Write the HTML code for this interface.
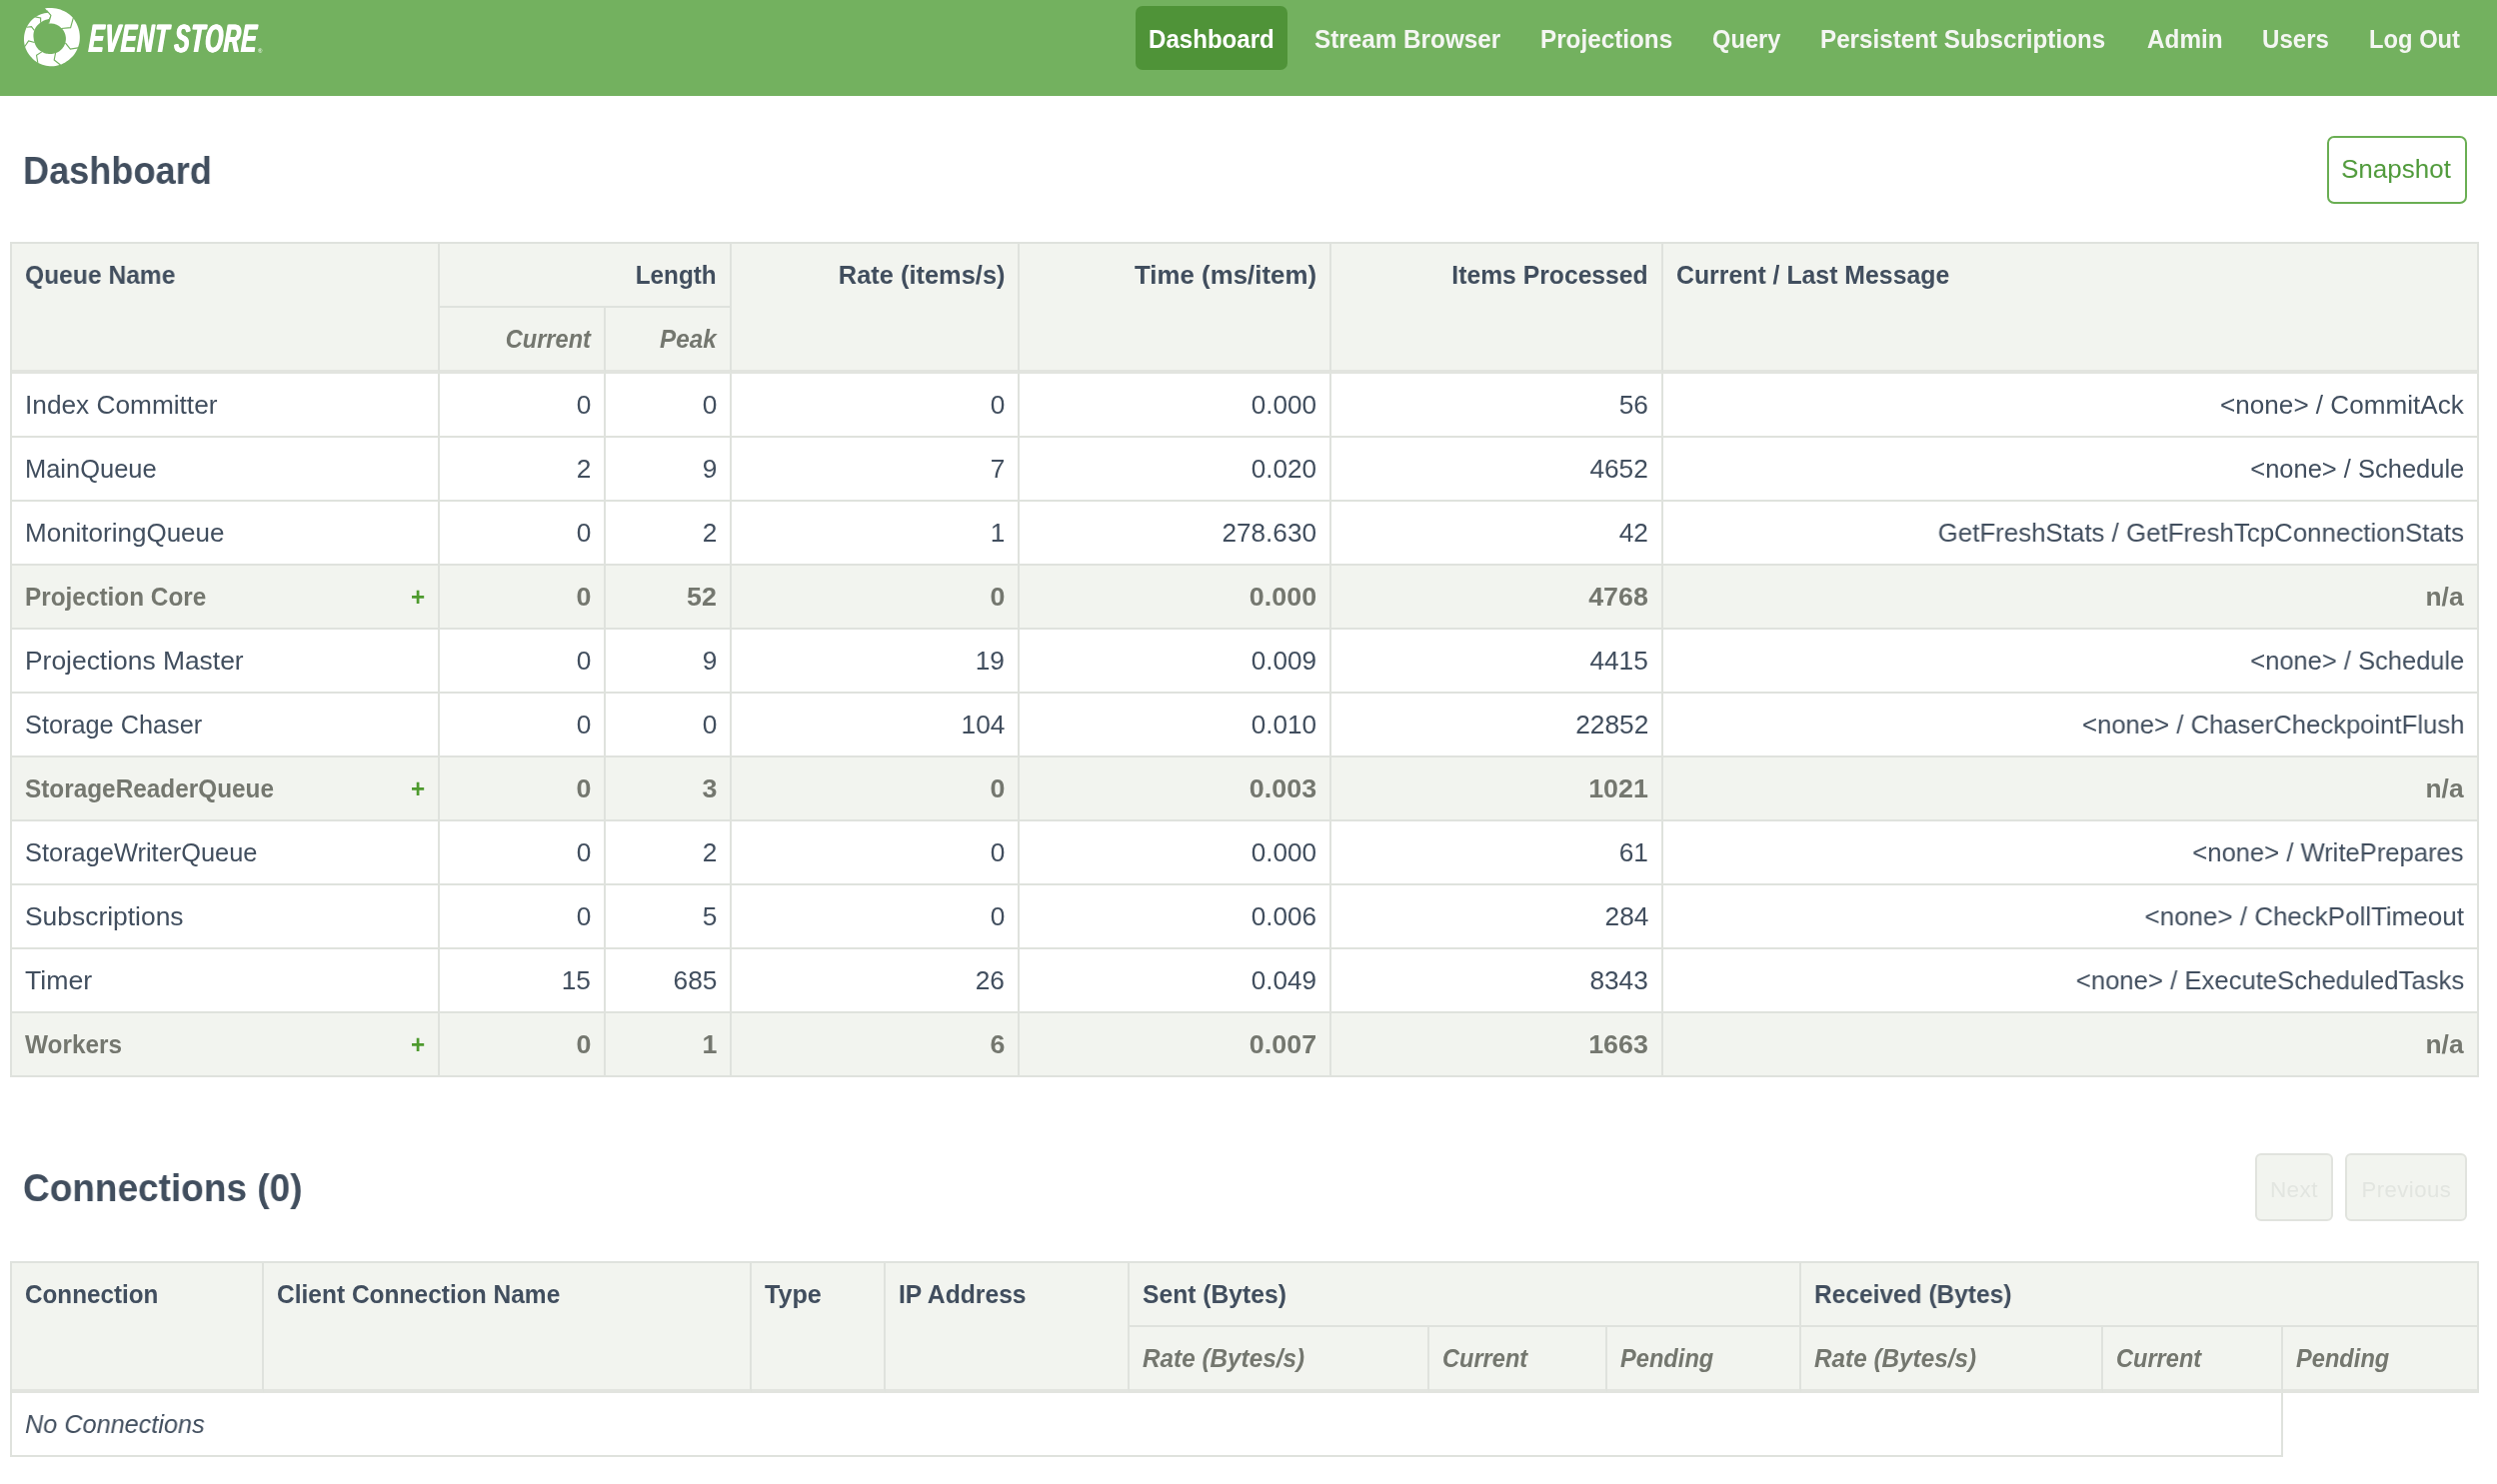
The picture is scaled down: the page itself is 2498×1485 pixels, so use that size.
<!DOCTYPE html>
<html lang="en"><head><meta charset="utf-8"><title>Event Store - Dashboard</title>
<style>
*{box-sizing:border-box;margin:0;padding:0}
html,body{width:2498px;height:1485px;background:#fff;overflow:hidden}
body{position:relative;font-family:"Liberation Sans", sans-serif;font-size:26px;line-height:36px;color:#414e5e;-webkit-font-smoothing:antialiased}
#page{position:absolute;left:0;top:0;width:2498px;height:1485px;will-change:transform}
.x{display:inline-block;white-space:nowrap}
#hdr{position:absolute;left:0;top:0;width:2498px;height:96px;background:#73b15f}
#nav a{position:absolute;top:6px;height:64px;line-height:67px;padding:0 13px;color:#f4f6f2;font-weight:700;font-size:26px;border-radius:7px;white-space:nowrap;text-decoration:none}
#nav a.act{background:#4f9338;color:#fff}
h1{position:absolute;left:23px;font-size:39px;line-height:54px;font-weight:700;color:#414e5e;white-space:nowrap}
.btn{position:absolute;height:68px;line-height:62px;border:2px solid #6aae53;border-radius:7px;color:#4f9a3a;text-align:center;font-size:26px;background:#fff}
.btn.dis{border-color:#e1e3de;background:#f2f4ef;color:#e2e5e0;font-size:22.4px;line-height:70px;border-radius:6px;letter-spacing:.45px}
table{position:absolute;left:10px;border-collapse:separate;border-spacing:0;table-layout:fixed;border-top:2px solid #dfe2dd;border-left:2px solid #dfe2dd}
td,th{height:64px;padding:13px 13px 13px 13px;border-right:2px solid #dfe2dd;border-bottom:2px solid #dfe2dd;vertical-align:top;text-align:left;font-weight:400;white-space:nowrap;overflow:visible}
th{background:#f2f4ef;font-weight:700}
th.sub{font-style:italic;color:#74776f;height:66px;border-bottom:4px solid #e2e4df}
th.rs{border-bottom:4px solid #e2e4df}
.r{text-align:right}
tr.g td{background:#f2f4ef;color:#74776f;font-weight:700}
.plus{float:right;color:#4e9a2e;font-weight:700}
em{font-style:italic}
#brand{position:absolute;left:89px;top:15.5px;height:44px;line-height:44px;color:#fff;white-space:nowrap;font-family:"Liberation Sans",sans-serif}
#brand .bt{display:inline-block;font-size:39.5px;font-weight:700;font-style:italic;transform:skewX(-3.2deg) scaleX(.5806);transform-origin:0 50%;text-shadow:1px 0 0 #fff,-1px 0 0 #fff;letter-spacing:1.5px;word-spacing:-4px}
#brand .reg{position:absolute;left:169px;top:31.5px;font-size:6px;line-height:8px;font-weight:700;opacity:.8}
</style></head>
<body><div id="page">
<div id="hdr"><svg id="logo" style="position:absolute;left:0;top:0" width="100" height="96" viewBox="0 0 100 96"><path d="M44.99 8.19 L45.56 8.15 L47.70 7.94 L49.85 7.89 L52.00 7.93 L54.14 8.13 L56.27 8.47 L58.37 8.96 L60.43 9.60 L62.44 10.38 L64.40 11.31 L66.29 12.36 L68.10 13.55 L69.83 14.86 L71.46 16.29 L72.99 17.83 L74.27 19.59 L75.42 21.42 L76.44 23.32 L77.34 25.26 L78.12 27.25 L78.75 29.28 L79.24 31.34 L79.59 33.42 L79.79 35.52 L79.84 37.62 L79.76 39.71 L79.54 41.79 L79.17 43.84 L78.60 45.84 L77.86 47.77 L77.06 49.66 L76.14 51.49 L75.09 53.24 L73.90 54.89 L72.58 56.43 L71.17 57.86 L69.66 59.18 L68.12 60.44 L66.52 61.61 L64.84 62.66 L63.10 63.59 L61.30 64.39 L59.45 65.04 L57.56 65.54 L55.64 65.90 L53.71 66.13 L51.78 66.22 L49.85 66.17 L47.94 66.02 L46.05 65.74 L44.19 65.33 L42.36 64.79 L40.59 64.12 L38.87 63.34 L37.22 62.42 L35.68 61.35 L34.22 60.18 L32.86 58.92 L31.57 57.60 L30.33 56.25 L29.18 54.82 L28.14 53.31 L27.20 51.74 L26.38 50.11 L25.68 48.43 L25.10 46.71 L24.63 44.96 L24.29 43.18 L24.07 41.38 L23.98 39.57 L24.01 37.77 L24.15 35.97 L24.42 34.18 L24.81 32.42 L25.32 30.70 L25.95 29.01 L26.69 27.37 L27.52 25.78 L28.45 24.24 L29.49 22.76 L30.63 21.36 L31.87 20.04 L33.19 18.81 L34.60 17.68 L36.09 16.65 L37.66 15.74 L39.29 14.95 L40.97 14.27 L42.69 13.71 L44.45 13.27 L46.24 12.95 L48.04 12.76 L48.49 12.74 L50.77 15.52 L48.88 19.05 L48.48 19.08 L47.14 19.38 L45.84 19.77 L44.57 20.26 L43.36 20.82 L42.19 21.46 L41.09 22.18 L40.03 22.95 L39.03 23.77 L38.09 24.65 L37.22 25.58 L36.42 26.58 L35.70 27.61 L35.06 28.69 L34.50 29.80 L34.07 30.97 L33.77 32.17 L33.57 33.38 L33.45 34.58 L33.42 35.77 L33.48 36.95 L33.62 38.10 L33.77 39.23 L33.94 40.34 L34.18 41.43 L34.50 42.50 L34.83 43.55 L35.23 44.58 L35.70 45.57 L36.24 46.53 L36.85 47.44 L37.51 48.31 L38.24 49.13 L39.01 49.89 L39.84 50.60 L40.71 51.25 L41.63 51.83 L42.58 52.34 L43.57 52.79 L44.58 53.16 L45.61 53.46 L46.66 53.69 L47.72 53.85 L48.78 53.93 L49.85 53.93 L50.92 53.95 L51.99 53.90 L53.06 53.78 L54.13 53.58 L55.18 53.30 L56.20 52.93 L57.20 52.49 L58.17 51.98 L59.10 51.40 L59.99 50.75 L60.84 50.05 L61.64 49.28 L62.38 48.46 L63.07 47.58 L63.69 46.66 L64.23 45.68 L64.69 44.66 L65.09 43.62 L65.41 42.55 L65.66 41.46 L65.82 40.35 L65.92 39.23 L65.91 38.11 L65.80 36.99 L65.62 35.89 L65.36 34.80 L65.03 33.74 L64.62 32.70 L64.15 31.70 L63.60 30.73 L62.97 29.82 L62.29 28.95 L61.54 28.14 L60.75 27.38 L59.90 26.69 L59.02 26.06 L58.09 25.49 L57.13 24.98 L56.14 24.54 L55.13 24.17 L54.10 23.87 L53.05 23.64 L51.99 23.49 L50.92 23.41 L49.85 23.41 L48.79 23.48 L48.57 23.56 L50.88 15.36Z" fill="#fff"/><path d="M46.78 10.50 L50.88 15.36 L48.67 23.30M73.41 17.67 L70.59 27.66 L61.38 28.48M78.02 47.84 L70.34 49.17 L65.37 42.92M60.50 65.04 L54.20 59.92 L55.54 53.01M37.82 63.00 L36.54 55.31 L41.81 51.88M24.76 46.50 L28.60 40.97 L34.64 42.56M26.55 27.20 L31.41 26.63 L34.33 30.32M35.25 16.85 L40.63 17.93 L40.63 22.69" fill="none" stroke="#73b15f" stroke-width="1.15" stroke-linejoin="miter"/></svg><div id="brand"><span class="bt">EVENT STORE</span><span class="reg">®</span></div><div id="nav"><a class="act" style="left:1136.0px;width:152px"><span class="x" style="transform:scaleX(0.9264);transform-origin:0 50%;">Dashboard</span></a><a class="" style="left:1301.5px"><span class="x" style="transform:scaleX(0.9339);transform-origin:0 50%;">Stream Browser</span></a><a class="" style="left:1527.7px"><span class="x" style="transform:scaleX(0.9331);transform-origin:0 50%;">Projections</span></a><a class="" style="left:1699.6px"><span class="x" style="transform:scaleX(0.9108);transform-origin:0 50%;">Query</span></a><a class="" style="left:1808.0px"><span class="x" style="transform:scaleX(0.9311);transform-origin:0 50%;">Persistent Subscriptions</span></a><a class="" style="left:2134.6px"><span class="x" style="transform:scaleX(0.9351);transform-origin:0 50%;">Admin</span></a><a class="" style="left:2250.0px"><span class="x" style="transform:scaleX(0.9256);transform-origin:0 50%;">Users</span></a><a class="" style="left:2357.0px"><span class="x" style="transform:scaleX(0.9136);transform-origin:0 50%;">Log Out</span></a></div></div>
<h1 style="top:144px"><span class="x" style="transform:scaleX(0.9268);transform-origin:0 50%;">Dashboard</span></h1>
<div class="btn" style="left:2328px;top:136px;width:140px"><span class="x" style="transform:scaleX(0.9977);transform-origin:50% 50%;margin-right:2px;">Snapshot</span></div>
<table id="t1" style="top:242px;width:2470px"><colgroup><col style="width:428px"><col style="width:166px"><col style="width:126px"><col style="width:288px"><col style="width:312px"><col style="width:332px"><col style="width:816px"></colgroup><thead><tr><th rowspan="2" class="rs"><span class="x" style="transform:scaleX(0.9463);transform-origin:0 50%;">Queue Name</span></th><th colspan="2" class="r"><span class="x" style="transform:scaleX(0.9336);transform-origin:100% 50%;">Length</span></th><th rowspan="2" class="rs r"><span class="x" style="transform:scaleX(0.9777);transform-origin:100% 50%;">Rate (items/s)</span></th><th rowspan="2" class="rs r"><span class="x" style="transform:scaleX(0.9945);transform-origin:100% 50%;">Time (ms/item)</span></th><th rowspan="2" class="rs r"><span class="x" style="transform:scaleX(0.9500);transform-origin:100% 50%;">Items Processed</span></th><th rowspan="2" class="rs"><span class="x" style="transform:scaleX(0.9552);transform-origin:0 50%;">Current / Last Message</span></th></tr><tr><th class="sub r"><span class="x" style="transform:scaleX(0.9067);transform-origin:100% 50%;">Current</span></th><th class="sub r"><span class="x" style="transform:scaleX(0.9334);transform-origin:100% 50%;">Peak</span></th></tr></thead><tbody><tr class=""><td><span class="x" style="transform:scaleX(1.0093);transform-origin:0 50%;">Index Committer</span></td><td class="r"><span class="x" style="transform:scaleX(1.0108);transform-origin:100% 50%;">0</span></td><td class="r"><span class="x" style="transform:scaleX(1.0108);transform-origin:100% 50%;">0</span></td><td class="r"><span class="x" style="transform:scaleX(1.0108);transform-origin:100% 50%;">0</span></td><td class="r"><span class="x" style="transform:scaleX(1.0036);transform-origin:100% 50%;">0.000</span></td><td class="r"><span class="x" style="transform:scaleX(1.0108);transform-origin:100% 50%;">56</span></td><td class="r"><span class="x" style="transform:scaleX(1.0038);transform-origin:100% 50%;">&lt;none&gt; / CommitAck</span></td></tr><tr class=""><td><span class="x" style="transform:scaleX(0.9794);transform-origin:0 50%;">MainQueue</span></td><td class="r"><span class="x" style="transform:scaleX(1.0108);transform-origin:100% 50%;">2</span></td><td class="r"><span class="x" style="transform:scaleX(1.0108);transform-origin:100% 50%;">9</span></td><td class="r"><span class="x" style="transform:scaleX(1.0108);transform-origin:100% 50%;">7</span></td><td class="r"><span class="x" style="transform:scaleX(1.0036);transform-origin:100% 50%;">0.020</span></td><td class="r"><span class="x" style="transform:scaleX(1.0105);transform-origin:100% 50%;">4652</span></td><td class="r"><span class="x" style="transform:scaleX(0.9805);transform-origin:100% 50%;">&lt;none&gt; / Schedule</span></td></tr><tr class=""><td><span class="x" style="transform:scaleX(1.0002);transform-origin:0 50%;">MonitoringQueue</span></td><td class="r"><span class="x" style="transform:scaleX(1.0108);transform-origin:100% 50%;">0</span></td><td class="r"><span class="x" style="transform:scaleX(1.0108);transform-origin:100% 50%;">2</span></td><td class="r"><span class="x" style="transform:scaleX(1.0108);transform-origin:100% 50%;">1</span></td><td class="r"><span class="x" style="transform:scaleX(1.0058);transform-origin:100% 50%;">278.630</span></td><td class="r"><span class="x" style="transform:scaleX(1.0108);transform-origin:100% 50%;">42</span></td><td class="r"><span class="x" style="transform:scaleX(0.9950);transform-origin:100% 50%;">GetFreshStats / GetFreshTcpConnectionStats</span></td></tr><tr class="g"><td><span class="x" style="transform:scaleX(0.9366);transform-origin:0 50%;">Projection Core</span><span class="plus"><span class="x" style="transform:scaleX(0.9331);transform-origin:100% 50%;">+</span></span></td><td class="r"><span class="x" style="transform:scaleX(1.0313);transform-origin:100% 50%;">0</span></td><td class="r"><span class="x" style="transform:scaleX(1.0319);transform-origin:100% 50%;">52</span></td><td class="r"><span class="x" style="transform:scaleX(1.0313);transform-origin:100% 50%;">0</span></td><td class="r"><span class="x" style="transform:scaleX(1.0329);transform-origin:100% 50%;">0.000</span></td><td class="r"><span class="x" style="transform:scaleX(1.0316);transform-origin:100% 50%;">4768</span></td><td class="r"><span class="x" style="transform:scaleX(1.0150);transform-origin:100% 50%;">n/a</span></td></tr><tr class=""><td><span class="x" style="transform:scaleX(1.0155);transform-origin:0 50%;">Projections Master</span></td><td class="r"><span class="x" style="transform:scaleX(1.0108);transform-origin:100% 50%;">0</span></td><td class="r"><span class="x" style="transform:scaleX(1.0108);transform-origin:100% 50%;">9</span></td><td class="r"><span class="x" style="transform:scaleX(1.0108);transform-origin:100% 50%;">19</span></td><td class="r"><span class="x" style="transform:scaleX(1.0036);transform-origin:100% 50%;">0.009</span></td><td class="r"><span class="x" style="transform:scaleX(1.0105);transform-origin:100% 50%;">4415</span></td><td class="r"><span class="x" style="transform:scaleX(0.9805);transform-origin:100% 50%;">&lt;none&gt; / Schedule</span></td></tr><tr class=""><td><span class="x" style="transform:scaleX(0.9731);transform-origin:0 50%;">Storage Chaser</span></td><td class="r"><span class="x" style="transform:scaleX(1.0108);transform-origin:100% 50%;">0</span></td><td class="r"><span class="x" style="transform:scaleX(1.0108);transform-origin:100% 50%;">0</span></td><td class="r"><span class="x" style="transform:scaleX(1.0104);transform-origin:100% 50%;">104</span></td><td class="r"><span class="x" style="transform:scaleX(1.0036);transform-origin:100% 50%;">0.010</span></td><td class="r"><span class="x" style="transform:scaleX(1.0104);transform-origin:100% 50%;">22852</span></td><td class="r"><span class="x" style="transform:scaleX(0.9871);transform-origin:100% 50%;">&lt;none&gt; / ChaserCheckpointFlush</span></td></tr><tr class="g"><td><span class="x" style="transform:scaleX(0.9365);transform-origin:0 50%;">StorageReaderQueue</span><span class="plus"><span class="x" style="transform:scaleX(0.9331);transform-origin:100% 50%;">+</span></span></td><td class="r"><span class="x" style="transform:scaleX(1.0313);transform-origin:100% 50%;">0</span></td><td class="r"><span class="x" style="transform:scaleX(1.0313);transform-origin:100% 50%;">3</span></td><td class="r"><span class="x" style="transform:scaleX(1.0313);transform-origin:100% 50%;">0</span></td><td class="r"><span class="x" style="transform:scaleX(1.0329);transform-origin:100% 50%;">0.003</span></td><td class="r"><span class="x" style="transform:scaleX(1.0316);transform-origin:100% 50%;">1021</span></td><td class="r"><span class="x" style="transform:scaleX(1.0150);transform-origin:100% 50%;">n/a</span></td></tr><tr class=""><td><span class="x" style="transform:scaleX(0.9770);transform-origin:0 50%;">StorageWriterQueue</span></td><td class="r"><span class="x" style="transform:scaleX(1.0108);transform-origin:100% 50%;">0</span></td><td class="r"><span class="x" style="transform:scaleX(1.0108);transform-origin:100% 50%;">2</span></td><td class="r"><span class="x" style="transform:scaleX(1.0108);transform-origin:100% 50%;">0</span></td><td class="r"><span class="x" style="transform:scaleX(1.0036);transform-origin:100% 50%;">0.000</span></td><td class="r"><span class="x" style="transform:scaleX(1.0108);transform-origin:100% 50%;">61</span></td><td class="r"><span class="x" style="transform:scaleX(0.9844);transform-origin:100% 50%;">&lt;none&gt; / WritePrepares</span></td></tr><tr class=""><td><span class="x" style="transform:scaleX(1.0160);transform-origin:0 50%;">Subscriptions</span></td><td class="r"><span class="x" style="transform:scaleX(1.0108);transform-origin:100% 50%;">0</span></td><td class="r"><span class="x" style="transform:scaleX(1.0108);transform-origin:100% 50%;">5</span></td><td class="r"><span class="x" style="transform:scaleX(1.0108);transform-origin:100% 50%;">0</span></td><td class="r"><span class="x" style="transform:scaleX(1.0036);transform-origin:100% 50%;">0.006</span></td><td class="r"><span class="x" style="transform:scaleX(1.0104);transform-origin:100% 50%;">284</span></td><td class="r"><span class="x" style="transform:scaleX(0.9984);transform-origin:100% 50%;">&lt;none&gt; / CheckPollTimeout</span></td></tr><tr class=""><td><span class="x" style="transform:scaleX(1.0267);transform-origin:0 50%;">Timer</span></td><td class="r"><span class="x" style="transform:scaleX(1.0108);transform-origin:100% 50%;">15</span></td><td class="r"><span class="x" style="transform:scaleX(1.0104);transform-origin:100% 50%;">685</span></td><td class="r"><span class="x" style="transform:scaleX(1.0108);transform-origin:100% 50%;">26</span></td><td class="r"><span class="x" style="transform:scaleX(1.0036);transform-origin:100% 50%;">0.049</span></td><td class="r"><span class="x" style="transform:scaleX(1.0105);transform-origin:100% 50%;">8343</span></td><td class="r"><span class="x" style="transform:scaleX(0.9878);transform-origin:100% 50%;">&lt;none&gt; / ExecuteScheduledTasks</span></td></tr><tr class="g"><td><span class="x" style="transform:scaleX(0.9375);transform-origin:0 50%;">Workers</span><span class="plus"><span class="x" style="transform:scaleX(0.9331);transform-origin:100% 50%;">+</span></span></td><td class="r"><span class="x" style="transform:scaleX(1.0313);transform-origin:100% 50%;">0</span></td><td class="r"><span class="x" style="transform:scaleX(1.0313);transform-origin:100% 50%;">1</span></td><td class="r"><span class="x" style="transform:scaleX(1.0313);transform-origin:100% 50%;">6</span></td><td class="r"><span class="x" style="transform:scaleX(1.0329);transform-origin:100% 50%;">0.007</span></td><td class="r"><span class="x" style="transform:scaleX(1.0316);transform-origin:100% 50%;">1663</span></td><td class="r"><span class="x" style="transform:scaleX(1.0150);transform-origin:100% 50%;">n/a</span></td></tr></tbody></table>
<h1 style="top:1162px"><span class="x" style="transform:scaleX(0.9484);transform-origin:0 50%;">Connections (0)</span></h1>
<div class="btn dis" style="left:2256px;top:1154px;width:78px"><span class="x" style="transform:scaleX(1.0052);transform-origin:50% 50%;">Next</span></div>
<div class="btn dis" style="left:2346px;top:1154px;width:122px"><span class="x" style="transform:scaleX(0.9898);transform-origin:50% 50%;">Previous</span></div>
<table id="t2" style="top:1262px;width:2470px"><colgroup><col style="width:252px"><col style="width:488px"><col style="width:134px"><col style="width:244px"><col style="width:300px"><col style="width:178px"><col style="width:194px"><col style="width:302px"><col style="width:180px"><col style="width:196px"></colgroup><thead><tr><th rowspan="2" class="rs"><span class="x" style="transform:scaleX(0.9326);transform-origin:0 50%;">Connection</span></th><th rowspan="2" class="rs"><span class="x" style="transform:scaleX(0.9428);transform-origin:0 50%;">Client Connection Name</span></th><th rowspan="2" class="rs"><span class="x" style="transform:scaleX(0.9678);transform-origin:0 50%;">Type</span></th><th rowspan="2" class="rs"><span class="x" style="transform:scaleX(0.9494);transform-origin:0 50%;">IP Address</span></th><th colspan="3"><span class="x" style="transform:scaleX(0.9491);transform-origin:0 50%;">Sent (Bytes)</span></th><th colspan="3"><span class="x" style="transform:scaleX(0.9421);transform-origin:0 50%;">Received (Bytes)</span></th></tr><tr><th class="sub"><span class="x" style="transform:scaleX(0.9348);transform-origin:0 50%;">Rate (Bytes/s)</span></th><th class="sub"><span class="x" style="transform:scaleX(0.9067);transform-origin:0 50%;">Current</span></th><th class="sub"><span class="x" style="transform:scaleX(0.9094);transform-origin:0 50%;">Pending</span></th><th class="sub"><span class="x" style="transform:scaleX(0.9348);transform-origin:0 50%;">Rate (Bytes/s)</span></th><th class="sub"><span class="x" style="transform:scaleX(0.9067);transform-origin:0 50%;">Current</span></th><th class="sub"><span class="x" style="transform:scaleX(0.9094);transform-origin:0 50%;">Pending</span></th></tr></thead><tbody><tr><td colspan="9"><em><span class="x" style="transform:scaleX(0.9714);transform-origin:0 50%;">No Connections</span></em></td></tr></tbody></table>
</div></body></html>
